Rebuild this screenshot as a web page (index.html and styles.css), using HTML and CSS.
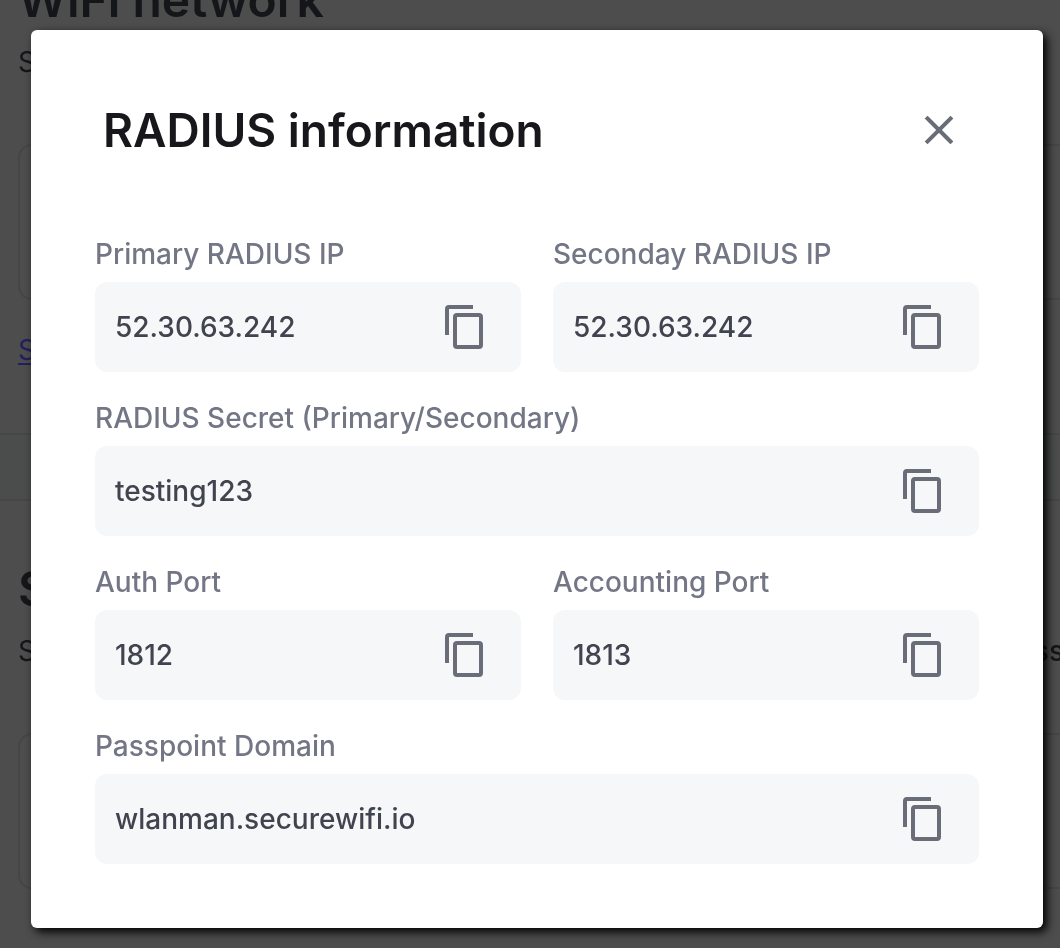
FILE: index.html
```html
<!DOCTYPE html>
<html lang="en">
<head>
<meta charset="utf-8">
<meta name="viewport" content="width=device-width, initial-scale=1">
<title>RADIUS information</title>
<link rel="stylesheet" href="styles.css">
</head>
<body>
<svg class="sprite" aria-hidden="true">
  <symbol id="copy" viewBox="0 0 48 48" fill="none" stroke="currentColor" stroke-width="4">
    <path d="M6 32V6q0-2 2-2h24"/>
    <rect x="14" y="12" width="26" height="32" rx="2"/>
  </symbol>
</svg>

<div class="page" aria-hidden="true">
  <section class="network">
    <h2 class="page-title">WiFi network</h2>
    <p class="page-text">S</p>
    <div class="panel"></div>
    <a class="page-link" href="#">S</a>
  </section>
  <div class="band"></div>
  <section class="setup">
    <h2 class="page-title">S</h2>
    <p class="page-text"><span>S</span><span class="strong">ss</span></p>
    <div class="panel"></div>
  </section>
</div>

<div class="overlay">
  <main class="dialog" role="dialog" aria-modal="true" aria-labelledby="dialog-title">
    <header class="dialog-header">
      <h1 class="dialog-title" id="dialog-title">RADIUS information</h1>
      <button class="icon-button" type="button" aria-label="Close">
        <svg class="icon" viewBox="0 0 48 48" fill="none" stroke="currentColor" stroke-width="4" stroke-linecap="square"><path d="M12.500 12.500l23 23M35.500 12.500l-23 23"/></svg>
      </button>
    </header>
    <div class="fields">
      <div class="field">
        <label class="label" for="primary">Primary RADIUS IP</label>
        <div class="box">
          <input class="value" id="primary" value="52.30.63.242" readonly>
          <button class="icon-button" type="button" aria-label="Copy primary IP"><svg class="icon"><use href="#copy"/></svg></button>
        </div>
      </div>
      <div class="field">
        <label class="label" for="secondary">Seconday RADIUS IP</label>
        <div class="box">
          <input class="value" id="secondary" value="52.30.63.242" readonly>
          <button class="icon-button" type="button" aria-label="Copy secondary IP"><svg class="icon"><use href="#copy"/></svg></button>
        </div>
      </div>
      <div class="field wide">
        <label class="label" for="secret">RADIUS Secret (Primary/Secondary)</label>
        <div class="box">
          <input class="value" id="secret" value="testing123" readonly>
          <button class="icon-button" type="button" aria-label="Copy secret"><svg class="icon"><use href="#copy"/></svg></button>
        </div>
      </div>
      <div class="field">
        <label class="label" for="auth">Auth Port</label>
        <div class="box">
          <input class="value" id="auth" value="1812" readonly>
          <button class="icon-button" type="button" aria-label="Copy auth port"><svg class="icon"><use href="#copy"/></svg></button>
        </div>
      </div>
      <div class="field">
        <label class="label" for="accounting">Accounting Port</label>
        <div class="box">
          <input class="value" id="accounting" value="1813" readonly>
          <button class="icon-button" type="button" aria-label="Copy accounting port"><svg class="icon"><use href="#copy"/></svg></button>
        </div>
      </div>
      <div class="field wide">
        <label class="label" for="domain">Passpoint Domain</label>
        <div class="box">
          <input class="value" id="domain" value="wlanman.securewifi.io" readonly>
          <button class="icon-button" type="button" aria-label="Copy domain"><svg class="icon"><use href="#copy"/></svg></button>
        </div>
      </div>
    </div>
  </main>
</div>
</body>
</html>
```
FILE: styles.css
```css
* {
  box-sizing: border-box;
}

body {
  margin: 0;
  background: #4d4d4d;
  color: #15161a;
  font-family: Inter, "Liberation Sans", sans-serif;
  font-size: 28px;
  line-height: 40px;
}

h1, h2, p {
  margin: 0;
}

.sprite {
  position: absolute;
  width: 0;
  height: 0;
}

/* Dimmed page behind the dialog */
.page {
  position: fixed;
  inset: 0;
  overflow: hidden;
}

.network,
.setup {
  padding-left: 18px;
}

.network {
  margin-top: -30px;
  padding-bottom: 63px;
}

.page-title {
  font-size: 48px;
  font-weight: 600;
  line-height: 60px;
}

.page-text {
  display: flex;
  justify-content: space-between;
  margin-top: 12px;
}

.network .page-title {
  margin-bottom: 12px;
}

.strong {
  margin-right: -4px;
  font-weight: 500;
}

.panel {
  height: 156px;
  margin: 62px -20px 30px 0;
  border: 2px solid #464646;
  border-radius: 14px;
}

.page-link {
  color: #231e5e;
  text-decoration-thickness: 2px;
  text-underline-offset: 3px;
}

.band {
  height: 68px;
  border: solid #464646;
  border-width: 2px 0;
  background: #4a4d4b;
}

.setup {
  padding-top: 58px;
}

/* Dialog */
.overlay {
  position: relative;
  padding: 30px 17px 20px 31px;
}

.dialog {
  padding: 64px;
  border-radius: 6px;
  background: #fff;
  box-shadow: 4px 4px 10px #000;
}

.dialog-header {
  display: flex;
  align-items: center;
  justify-content: space-between;
  padding: 6px 16px 74px 8px;
}

.dialog-title {
  color: #17171c;
  font-size: 46px;
  font-weight: 600;
  line-height: 60px;
}

.fields {
  display: grid;
  grid-template-columns: repeat(2, minmax(0, 1fr));
  gap: 26px 32px;
}

.wide {
  grid-column: 1 / -1;
}

.label {
  display: block;
  margin-bottom: 8px;
  color: #737685;
  font-weight: 500;
}

.box {
  display: flex;
  align-items: center;
  height: 90px;
  padding: 0 32px 0 20px;
  border-radius: 12px;
  background: #f5f7f9;
}

.value {
  flex: 1;
  min-width: 0;
  padding: 0;
  border: 0;
  outline: 0;
  background: none;
  color: #40444f;
  font: inherit;
  font-weight: 500;
}

.icon-button {
  flex: none;
  padding: 0;
  border: 0;
  background: none;
  color: #686d78;
  cursor: pointer;
}

.icon {
  display: block;
  width: 48px;
  height: 48px;
}
```
